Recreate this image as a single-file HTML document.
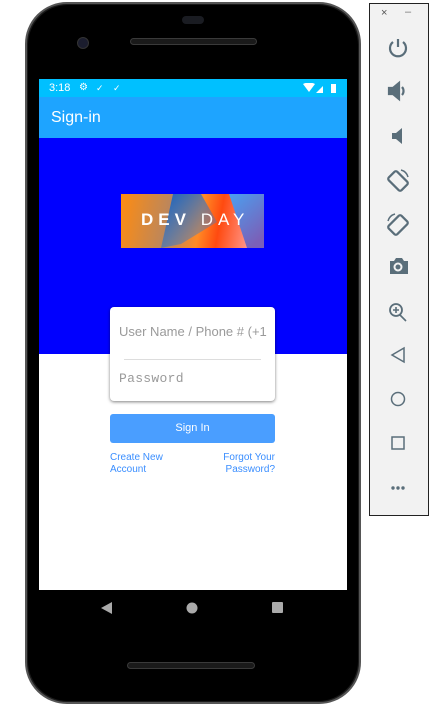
<!DOCTYPE html>
<html><head><style>
*{margin:0;padding:0;box-sizing:border-box}
body{width:429px;height:720px;background:#fff;position:relative;overflow:hidden;font-family:"Liberation Sans",sans-serif}
.abs{position:absolute}
</style></head><body>
<div class="abs" style="left:25px;top:2px;width:336px;height:702px;border-radius:42px;background:#1a1a1a;border:2px solid #555"></div>
<div class="abs" style="left:28px;top:5px;width:330px;height:696px;border-radius:40px;background:#000"></div>
<div class="abs" style="left:182px;top:16px;width:22px;height:8px;border-radius:4px;background:#1a1c22"></div>
<div class="abs" style="left:77px;top:37px;width:12px;height:12px;border-radius:6px;background:#1b1d2e;border:1px solid #333"></div>
<div class="abs" style="left:130px;top:38px;width:127px;height:7px;border-radius:4px;background:#1a1a1a;border:1px solid #3a3a3a"></div>
<div class="abs" style="left:127px;top:662px;width:128px;height:7px;border-radius:4px;background:#1a1a1a;border:1px solid #3a3a3a"></div>
<div class="abs" style="left:39px;top:79px;width:308px;height:18px;background:#00c0ff;color:#fff;font-size:11px;line-height:18px">
 <span style="position:absolute;left:10px">3:18</span>
 <span style="position:absolute;left:40px;font-size:10px">⚙</span>
 <span style="position:absolute;left:57px;font-size:9px">✓</span>
 <span style="position:absolute;left:74px;font-size:9px">✓</span>
 <svg style="position:absolute;left:264px;top:4px" width="40" height="11"><path d="M0 1 Q6 -2 12 1 L6 9Z" fill="#fff"/><path d="M13 10 L20 3 L20 10Z" fill="#fff"/><rect x="28" y="1" width="5" height="9" fill="#fff"/></svg>
</div>
<div class="abs" style="left:39px;top:97px;width:308px;height:41px;background:#1ea4ff;color:#fff;font-size:16px;line-height:42px;padding-left:12px">Sign-in</div>
<div class="abs" style="left:39px;top:138px;width:308px;height:216px;background:#0000ff"></div>
<div class="abs" style="left:39px;top:354px;width:308px;height:236px;background:#fff"></div>
<div class="abs" style="left:121px;top:194px;width:143px;height:54px;overflow:hidden;background:linear-gradient(100deg,#ff8c10 0%,#b88660 35%,#ff8a25 55%,#ff4a10 68%,#ff9a90 90%)">
 <svg class="abs" style="left:0;top:0" width="143" height="54">
  <defs><linearGradient id="g1" x1="0" y1="0" x2="1" y2="1"><stop offset="0" stop-color="#1560c0"/><stop offset="1" stop-color="#4a88d0" stop-opacity=".2"/></linearGradient>
  <linearGradient id="g2" x1="0" y1="0" x2="0.6" y2="1"><stop offset="0" stop-color="#4aa0f0"/><stop offset="1" stop-color="#7a60b8"/></linearGradient></defs>
  <path d="M52 0 H80 L96 28 L60 50 L40 54 Z" fill="url(#g1)"/>
  <path d="M108 0 H143 V54 H126 Z" fill="url(#g2)"/>
 </svg>
 <div class="abs" style="left:20px;top:14px;color:#fff;font-size:17px;letter-spacing:5px;line-height:24px;white-space:nowrap"><b>DEV</b> <span style="font-weight:300">DAY</span></div>
</div>
<div class="abs" style="left:110px;top:307px;width:165px;height:94px;background:#fff;border-radius:4px;box-shadow:0 1px 3px rgba(0,0,0,.5)"></div>
<div class="abs" style="left:119px;top:324px;font-size:13px;color:#9a9a9a;white-space:nowrap;width:149px;overflow:hidden">User Name / Phone # (+1</div>
<div class="abs" style="left:124px;top:359px;width:137px;height:1px;background:#ddd"></div>
<div class="abs" style="left:119px;top:371px;font-size:13px;color:#9a9a9a;font-family:'Liberation Mono',monospace;letter-spacing:.3px">Password</div>
<div class="abs" style="left:110px;top:414px;width:165px;height:29px;background:#4a9eff;border-radius:3px;color:#fff;font-size:11px;text-align:center;line-height:29px">Sign In</div>
<div class="abs" style="left:110px;top:452px;font-size:10px;color:#3a8eff;line-height:12px">Create New<br>Account</div>
<div class="abs" style="left:200px;top:452px;width:75px;font-size:10px;color:#3a8eff;line-height:12px;text-align:right">Forgot Your<br>Password?</div>
<svg class="abs" style="left:95px;top:600px" width="200" height="16"><path d="M6 8 L17 2 L17 14Z" fill="#aaa"/><circle cx="97" cy="8" r="5.5" fill="#aaa"/><rect x="177" y="2" width="11" height="11" rx="1" fill="#aaa"/></svg>
<div class="abs" style="left:369px;top:3px;width:60px;height:513px;background:#f2f2f2;border:1px solid #222"></div>
<div class="abs" style="left:381px;top:7px;font-size:11px;color:#555">×</div>
<div class="abs" style="left:405px;top:6px;font-size:11px;color:#777">–</div>
<svg class="abs" style="left:385px;top:35px" width="26" height="470" fill="none" stroke="#5a6e7a" stroke-width="2.2">
 <path d="M13 4 V12 M8 7 A8 8 0 1 0 18 7"/>
 <path d="M4 53 h4 l6 -5 v16 l-6 -5 h-4z" fill="#5a6e7a"/><path d="M17 52 a6 6 0 0 1 0 8"/>
 <path d="M7 98 h4 l6 -5 v16 l-6 -5 h-4z" fill="#5a6e7a" stroke="none"/>
 <rect x="7" y="137" width="12" height="18" rx="2" transform="rotate(-45 13 146)"/><path d="M16 135 a10 10 0 0 1 7 7" stroke-width="1.5"/>
 <rect x="7" y="181" width="12" height="18" rx="2" transform="rotate(45 13 190)"/><path d="M10 179 a10 10 0 0 0 -7 7" stroke-width="1.5"/>
 <path d="M5 226 h4 l2 -3 h6 l2 3 h4 v13 h-18z" fill="#5a6e7a" stroke="none"/><circle cx="13" cy="232" r="3.5" stroke="#f2f2f2" stroke-width="2"/>
 <circle cx="11" cy="275" r="6" stroke-width="1.8"/><path d="M15 280 L21 286 M8 275h6 M11 272v6" stroke-width="1.6"/>
 <path d="M19 313 L7 320 L19 327Z" stroke-width="1.5"/>
 <circle cx="13" cy="364" r="6.5" stroke-width="1.5"/>
 <rect x="7" y="402" width="12" height="12" stroke-width="1.5"/>
 <g fill="#5a6e7a" stroke="none"><circle cx="8" cy="453" r="1.7"/><circle cx="13" cy="453" r="1.7"/><circle cx="18" cy="453" r="1.7"/></g>
</svg>
</body></html>
